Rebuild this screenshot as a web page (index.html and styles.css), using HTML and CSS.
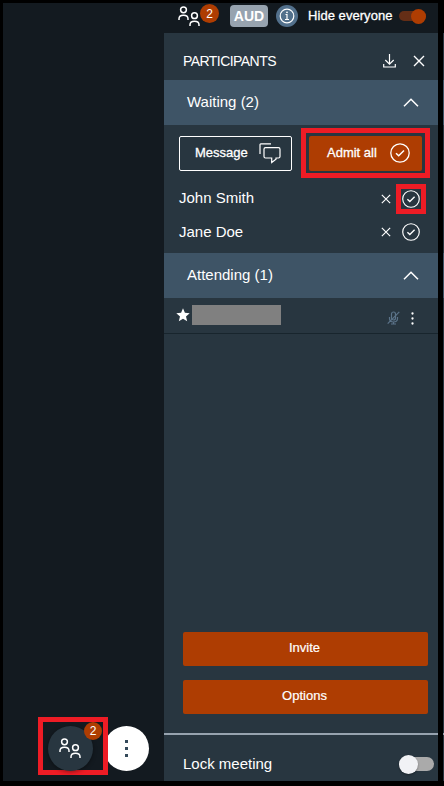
FILE: index.html
```html
<!DOCTYPE html>
<html lang="en">
<head>
<meta charset="utf-8">
<title>Participants</title>
<link rel="stylesheet" href="styles.css">
</head>
<body>
<svg class="defs" width="0" height="0">
  <symbol id="people" viewBox="0 0 22 21"><g fill="none" stroke="currentColor" stroke-width="1.5"><circle cx="5.5" cy="3.8" r="2.9"/><path d="M1 14v-1.200C1 10.500 2.600 9.300 5.500 9.300s4.500 1.200 4.500 3.500V14"/><circle cx="16.500" cy="9.700" r="2.900"/><path d="M12 20v-1.200c0-2.300 1.600-3.500 4.500-3.500s4.500 1.200 4.500 3.500V20"/></g></symbol>
  <symbol id="check" viewBox="0 0 20 20"><g fill="none" stroke="currentColor"><circle cx="10" cy="10" r="9.200" stroke-width="1.300"/><path d="M6 10.200l2.700 2.600 5.300-5.300" stroke-width="1.500"/></g></symbol>
  <symbol id="cross" viewBox="0 0 12 12"><path d="M1 1l10 10M11 1L1 11" fill="none" stroke="currentColor" stroke-width="1.400"/></symbol>
  <symbol id="chevron" viewBox="0 0 16 9"><path d="M1 8.300l7-7 7 7" fill="none" stroke="currentColor" stroke-width="1.500"/></symbol>
</svg>
<main class="app">
  <section class="stage">
    <div class="highlight dock-highlight">
      <button class="people-button"><svg width="22" height="21"><use href="#people"/></svg></button>
      <span class="badge dock-badge">2</span>
    </div>
    <button class="more"><i></i><i></i><i></i></button>
  </section>
  <section class="side">
    <header class="topbar">
      <svg class="top-people" width="22" height="21"><use href="#people"/></svg>
      <span class="badge top-badge">2</span>
      <span class="aud"><span>AUD</span></span>
      <svg class="info" width="22" height="22" viewBox="0 0 22 22"><circle cx="11" cy="11" r="11" fill="#52708c"/><g fill="none" stroke="#fff"><circle cx="11" cy="11" r="6.800" stroke-width="1.200"/><path d="M9.500 9.500h1.500v4.500M9 14.500h4" stroke-width="1.200"/></g><circle cx="11" cy="7.300" r=".9" fill="#fff"/></svg>
      <span class="hide-label">Hide everyone</span>
      <span class="switch on"><i></i></span>
    </header>
    <div class="title"><h1>PARTICIPANTS</h1>
      <svg class="download" width="13" height="14" viewBox="0 0 13 14"><path d="M6.500 0v10M2.300 6l4.200 4.200L10.700 6M.7 10v3h11.600v-3" fill="none" stroke="#fff" stroke-width="1.200"/></svg>
      <svg class="close" width="12" height="12"><use href="#cross"/></svg>
    </div>
    <div class="group"><h2 class="waiting">Waiting (2)</h2><svg width="16" height="9"><use href="#chevron"/></svg></div>
    <div class="waiting-area">
      <div class="actions">
        <button class="action message"><span>Message</span><svg width="22" height="21" viewBox="0 0 22 21"><path d="M1 11V1.700q0-.8.800-.8H12M6.500 4.700h13q1.500 0 1.500 1.500v7.300q0 1.500-1.500 1.500H17v1.200L12.700 19.500V15H6.500Q5 15 5 13.500V6.200q0-1.500 1.500-1.500z" fill="none" stroke="#fff" stroke-width="1.200"/></svg></button>
        <div class="highlight admit-highlight"><button class="action admit"><span>Admit all</span><svg width="20" height="20"><use href="#check"/></svg></button></div>
      </div>
      <div class="person"><span class="john">John Smith</span><svg class="reject" width="10" height="10" viewBox="0 0 12 12"><use href="#cross"/></svg><div class="highlight check-highlight"><svg width="18" height="18"><use href="#check"/></svg></div></div>
      <div class="person second"><span class="jane">Jane Doe</span><svg class="reject" width="10" height="10" viewBox="0 0 12 12"><use href="#cross"/></svg><svg class="single-check" width="18" height="18"><use href="#check"/></svg></div>
    </div>
    <div class="group"><h2 class="attending">Attending (1)</h2><svg width="16" height="9"><use href="#chevron"/></svg></div>
    <div class="attendee">
      <svg class="star" width="14" height="14" viewBox="0 0 14 14"><path d="M7 .3l1.900 4.500 4.800.4-3.700 3.200 1.200 4.900L7 10.700l-4.200 2.600L4 8.400.3 5.200l4.800-.4z" fill="#fff"/></svg>
      <span class="redacted"></span>
      <svg class="mic" width="13" height="14" viewBox="0 0 13 14"><g fill="none" stroke="#5b7389" stroke-width="1.200"><rect x="4.500" y="1" width="4" height="8" rx="2"/><path d="M2.500 6v1.500q0 3.500 4 3.500t4-3.500V6M6.500 11v2.500M4 13h5M.7 12.700L12.300.8"/></g></svg>
      <svg class="kebab" width="3" height="13" viewBox="0 0 3 13"><g fill="#fff"><circle cx="1.500" cy="1.500" r="1.150"/><circle cx="1.500" cy="6.500" r="1.150"/><circle cx="1.500" cy="11.500" r="1.150"/></g></svg>
    </div>
    <div class="bottom"><button>Invite</button><button>Options</button></div>
    <footer><span class="lock">Lock meeting</span><span class="switch off"><i></i></span></footer>
  </section>
</main>
<div class="edge"><i></i><i></i><i></i><i></i><i></i><i></i><i></i></div>
</body>
</html>
```
FILE: styles.css
```css
*{box-sizing:border-box}
body{margin:0;width:444px;height:786px;overflow:hidden;background:#000;color:#fff;display:flex;font-family:"Liberation Sans",Arial,sans-serif}
.defs{position:absolute}
button{font:inherit;color:inherit;border:0;margin:0;padding:0}
svg{display:block;flex:none}
h1,h2{margin:0;font-weight:400}
.app{display:flex;width:443px;height:786px;border:solid #000;border-width:3px 5px 5px 3px}
.stage{width:161px;background:#131a20;display:flex;align-items:flex-end;padding:0 0 6px 35px}
.highlight{border:5px solid #ee1c25;flex:none}
.dock-highlight{width:70px;height:58px;position:relative;z-index:1;padding:4px 0 0 5px}
.people-button{width:45px;height:45px;border-radius:50%;background:#283640;display:flex;align-items:center;justify-content:center;box-shadow:0 1px 4px #0006}
.people-button svg{margin-left:-1px}
.badge{border-radius:50%;background:#ae3d02;display:flex;align-items:center;justify-content:center;font-size:12px;line-height:1;flex:none}
.dock-badge{position:absolute;width:18px;height:18px;left:41px;top:0}
.more{width:45px;height:45px;border-radius:50%;background:#fff;margin:0 0 4px -4px;display:flex;flex-direction:column;align-items:center;justify-content:center;gap:4px;flex:none}
.more i{width:3px;height:3px;background:#34495a}
.side{width:274px;background:#283640;display:flex;flex-direction:column}
.topbar{height:30px;background:#131a20;display:flex;align-items:flex-start;flex:none}
.top-people{margin:3px 0 0 14px}
.top-badge{width:19px;height:19px;margin-top:1px}
.aud{width:38px;height:22px;border-radius:4px;background:#97a3af;font-size:14px;font-weight:700;margin:2px 0 0 11px;display:flex;align-items:center;justify-content:center;padding-bottom:1px}
.info{margin:2px 0 0 8px}
.hide-label{font-size:13px;line-height:16px;width:91px;margin:5px 0 0 10px;white-space:nowrap;letter-spacing:.05px;-webkit-text-stroke:.3px}
.switch{display:flex;align-items:center;flex:none}
.switch i{border-radius:50%}
.on{width:27px;height:10px;border-radius:5px;background:#652e16;justify-content:flex-end;margin-top:8px}
.on i{width:15px;height:15px;background:#ae3d02}
.title{height:47px;display:flex;align-items:center;flex:none;padding:8px 13px 0 19px}
.title h1{font-size:14px;letter-spacing:-.55px;padding-top:1px}
.download{margin-left:auto}
.close{margin-left:17px}
.group{height:45px;background:#3e5466;display:flex;align-items:center;justify-content:space-between;padding:0 19px 0 23px;flex:none}
.group h2{font-size:15px;line-height:20px;padding-bottom:2px}
.waiting-area{height:128px;flex:none}
.actions{display:flex;align-items:flex-start;padding:3px 8px 0 15px;justify-content:space-between}
.action{width:113px;height:35px;display:flex;align-items:center;font-size:13px;font-weight:400;-webkit-text-stroke:.3px}
.action span{padding-bottom:2px}
.message{background:transparent;border:1px solid #fff;border-radius:2px;margin-top:8px;padding-left:15px}
.message span{width:64px;text-align:left}
.message svg{margin-bottom:1px}
.admit{background:#ae3d02;border-radius:2px;padding-left:18px}
.admit span{width:63px;text-align:left}
.admit svg{margin-bottom:1px}
.admit-highlight{width:129px;height:50px;padding:3px}
.person{height:30px;margin-top:6px;display:flex;align-items:center;padding:0 12px 0 15px;font-size:15px}
.person span{padding-bottom:3px}
.person.second{margin-top:3px}
.second span{padding-bottom:1px}
.reject{margin-left:auto;margin-right:5px}
.check-highlight{width:30px;height:30px;display:flex;align-items:center;padding-left:.5px}
.single-check{margin:0 6.5px 0 5.5px}
.second .reject{margin-right:5px}
.attendee{height:36px;border-bottom:1px solid #18252d;display:flex;align-items:center;padding:0 24px 0 12px;flex:none}
.star{margin:0 0 2px}
.redacted{width:89px;height:20px;background:#808080;margin:0 0 1px 2px}
.mic{margin:5px 0 0 auto}
.kebab{margin:5px 0 0 11px}
.bottom{height:399px;padding:0 10px 19px 19px;display:flex;flex-direction:column;justify-content:flex-end;gap:14px;flex:none}
.bottom button{height:34px;background:#ae3d02;border-radius:2px;font-size:13px;-webkit-text-stroke:.2px;padding:0 2px 3px 0}
footer{height:48px;border-top:2px solid #97a3af;display:flex;align-items:center;justify-content:space-between;padding:12px 4px 0 19px;font-size:15px}
.lock{padding-bottom:1px}
.off{width:35px;height:14px;border-radius:7px;background:#aaa}
.off i{width:19px;height:19px;background:#f1f2f5;box-shadow:0 1px 2px #0005}
.edge{width:1px;padding-top:33px;display:flex;flex-direction:column}
.edge i{height:47px;background:#283640;flex:none}
.edge i:nth-child(2),.edge i:nth-child(4){height:45px;background:#3e5466}
.edge i:nth-child(3){height:128px}
.edge i:nth-child(5){height:435px}
.edge i:nth-child(6){height:2px;background:#97a3af}
.edge i:nth-child(7){height:46px}
```
